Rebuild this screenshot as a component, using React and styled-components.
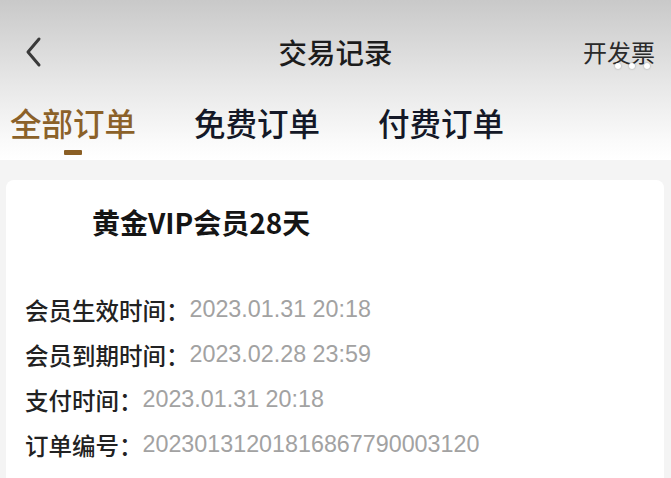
import React from 'react';
import styled, { createGlobalStyle } from 'styled-components';

const GlobalStyle = createGlobalStyle`
  html, body {
    margin: 0;
    padding: 0;
    background: #f4f4f4;
    font-family: "Noto Sans CJK SC", "Liberation Sans", sans-serif;
  }
`;

const Page = styled.div`
  width: 671px;
  height: 478px;
  overflow: hidden;
  background: #f4f4f4;
`;

const Header = styled.div`
  height: 160px;
  background: linear-gradient(180deg, #c9c9c9 0px, #e6e6e6 80px, #fafafa 140px, #ffffff 160px);
  padding-top: 27px;
  box-sizing: border-box;
`;

const NavBar = styled.div`
  display: grid;
  grid-template-columns: 1fr auto 1fr;
  align-items: center;
  height: 50px;
  padding: 0 16px;
`;

const BackButton = styled.div`
  display: flex;
  align-items: center;
  padding-left: 9px;
`;

const Title = styled.div`
  font-size: 28.5px;
  line-height: 50px;
  font-weight: 500;
  color: #1c1c1c;
`;

const Invoice = styled.div`
  position: relative;
  justify-self: end;
  font-size: 24px;
  line-height: 50px;
  color: #2a2a2a;
`;

const Dot = styled.span`
  position: absolute;
  top: 36px;
  width: 6px;
  height: 6px;
  border-radius: 50%;
  background: #ffffff;
  box-shadow: 0 0 2px rgba(0, 0, 0, 0.35);
  left: ${p => p.x}px;
`;

const Tabs = styled.div`
  display: flex;
  gap: 58px;
  padding-left: 10px;
  margin-top: 30px;
`;

const Tab = styled.div`
  display: flex;
  flex-direction: column;
  align-items: center;
`;

const TabLabel = styled.div`
  font-size: 31.5px;
  line-height: 31px;
  font-weight: 500;
  color: ${p => (p.active ? '#8b6129' : '#141827')};
`;

const Underline = styled.div`
  width: 18px;
  height: 5px;
  margin-top: 12px;
  border-radius: 1px;
  background: ${p => (p.active ? '#8b5f25' : 'transparent')};
`;

const Card = styled.div`
  margin: 20px 7px 0 6px;
  background: #ffffff;
  border-radius: 8px;
  padding: 28px 0 30px 19px;
  height: 320px;
  box-sizing: border-box;
`;

const CardTitle = styled.div`
  padding-left: 67px;
  font-size: 28px;
  line-height: 28px;
  font-weight: 700;
  color: #151515;
  margin-bottom: 51px;
`;

const Row = styled.div`
  display: flex;
  height: 45px;
  align-items: center;
`;

const Label = styled.span`
  font-size: 23.5px;
  font-weight: 500;
  color: #222222;
`;

const Value = styled.span`
  font-family: "Liberation Sans", "Noto Sans CJK SC", sans-serif;
  font-size: 23.3px;
  color: #a2a2a2;
`;

const rows = [
  ['会员生效时间：', '2023.01.31 20:18'],
  ['会员到期时间：', '2023.02.28 23:59'],
  ['支付时间：', '2023.01.31 20:18'],
  ['订单编号：', '20230131201816867790003120'],
];

const tabs = ['全部订单', '免费订单', '付费订单'];

export default function App() {
  return (
    <Page>
      <GlobalStyle />
      <Header>
        <NavBar>
          <BackButton>
            <svg width="17" height="32" viewBox="0 0 17 32">
              <path d="M14 3 L3 16 L14 29" fill="none" stroke="#3a3a3a" strokeWidth="3" strokeLinecap="round" strokeLinejoin="round" />
            </svg>
          </BackButton>
          <Title>交易记录</Title>
          <Invoice>
            开发票
            <Dot x={32} />
            <Dot x={46} />
            <Dot x={61} />
          </Invoice>
        </NavBar>
        <Tabs>
          {tabs.map((t, i) => (
            <Tab key={t}>
              <TabLabel active={i === 0}>{t}</TabLabel>
              <Underline active={i === 0} />
            </Tab>
          ))}
        </Tabs>
      </Header>
      <Card>
        <CardTitle>黄金VIP会员28天</CardTitle>
        {rows.map(([label, value]) => (
          <Row key={label}>
            <Label>{label}</Label>
            <Value>{value}</Value>
          </Row>
        ))}
      </Card>
    </Page>
  );
}
